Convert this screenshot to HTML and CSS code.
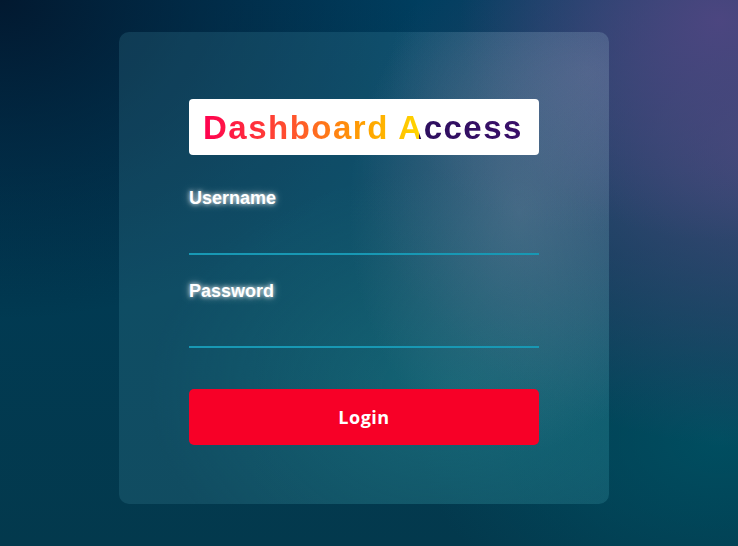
FILE: index.html
```html
<!DOCTYPE html>
<html lang="en">
<head>
<meta charset="utf-8">
<title>Dashboard Access</title>
<link rel="stylesheet" href="styles.css">
</head>
<body>
<main class="page">
  <form class="card">
    <div class="title-box"><h1 class="title">Dashboard Access</h1></div>
    <div class="field">
      <label class="label" for="user">Username</label>
      <input class="input" id="user" type="text">
    </div>
    <div class="field">
      <label class="label" for="pass">Password</label>
      <input class="input" id="pass" type="password">
    </div>
    <button class="btn" type="button">Login</button>
  </form>
</main>
</body>
</html>
```

FILE: styles.css
```css
* { box-sizing: border-box; }
html, body { margin: 0; height: 100%; }
body {
  font-family: "Liberation Sans", Arial, sans-serif;
  background:
    radial-gradient(ellipse 260px 220px at 720px 20px, rgba(80,70,130,0.9), rgba(80,70,130,0) 100%),
    radial-gradient(ellipse 420px 300px at 780px 150px, rgba(70,75,122,0.95), rgba(70,75,122,0) 100%),
    radial-gradient(ellipse 300px 200px at 720px 440px, rgba(0,80,98,0.9), rgba(0,80,98,0) 100%),
    radial-gradient(ellipse 420px 320px at 0px 0px, rgba(2,25,48,1), rgba(2,25,48,0) 100%),
    linear-gradient(180deg, #003e5f 0%, #013a52 55%, #03394d 100%);
  overflow: hidden;
}
.page {
  padding: 32px 0 0 119px;
}
.card {
  width: 490px;
  height: 472px;
  padding: 67px 70px 0 70px;
  border-radius: 10px;
  background:
    radial-gradient(ellipse 170px 240px at 400px 180px, rgba(110,130,155,0.45), rgba(110,130,155,0) 100%),
    radial-gradient(ellipse 200px 160px at 470px 40px, rgba(120,120,160,0.35), rgba(120,120,160,0) 100%),
    radial-gradient(ellipse 300px 220px at 330px 360px, rgba(25,125,135,0.5), rgba(25,125,135,0) 100%),
    rgba(80,160,180,0.19);
  display: flex;
  flex-direction: column;
}
.title-box {
  height: 56px;
  background: #fff;
  border-radius: 4px;
  padding: 0 14px;
  display: flex;
  align-items: center;
  margin-bottom: 33px;
}
.title {
  margin: 0;
  font-size: 33px;
  font-weight: 700;
  letter-spacing: 1.5px;
  line-height: 36px;
  padding-top: 2px;
  background: linear-gradient(90deg, #ff0050 0%, #ff5a2a 30%, #ffa000 50%, #ffd500 67.5%, #2d0f5e 67.5%, #3a0f6a 100%);
  -webkit-background-clip: text;
  background-clip: text;
  color: transparent;
}
.field {
  display: flex;
  flex-direction: column;
}
.field + .field { margin-top: 26px; }
.label {
  color: #fff;
  font-size: 18px;
  font-weight: 700;
  line-height: 21px;
  text-shadow: 0 0 4px rgba(255,255,255,0.85), 0 0 9px rgba(255,255,255,0.5);
}
.input {
  height: 46px;
  border: 0;
  border-bottom: 2px solid #1898b4;
  background: transparent;
  outline: none;
  color: #fff;
  font-size: 16px;
  padding: 0;
}
.btn {
  margin-top: 41px;
  height: 56px;
  border: 0;
  border-radius: 5px;
  background: #f70027;
  color: #fff;
  font-family: "Open Sans", "Liberation Sans", sans-serif;
  font-weight: 700;
  font-size: 18px;
  letter-spacing: 0.5px;
}
```
